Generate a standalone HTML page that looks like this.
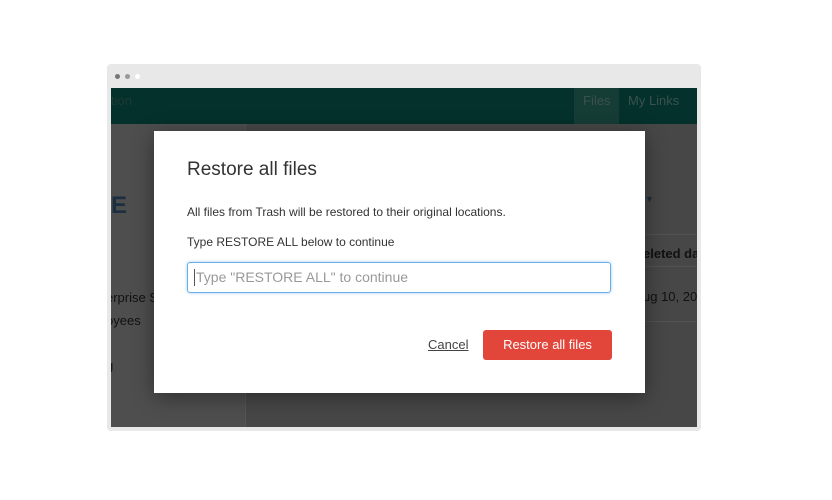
<!DOCTYPE html>
<html><head><style>
*{margin:0;padding:0;box-sizing:border-box}
body{width:832px;height:500px;background:#fff;position:relative;font-family:"Liberation Sans",sans-serif;overflow:hidden}
.frame{position:absolute;left:107px;top:64px;width:594px;height:367px;background:#e8e8e8;border-radius:4px}
.dot{position:absolute;top:74px;width:5px;height:5px;border-radius:50%}
.content{position:absolute;left:111px;top:88px;width:586px;height:339px;background:#474747;overflow:hidden}
.hdr{position:absolute;left:0;top:0;width:586px;height:36px;background:#04312b}
.side{position:absolute;left:0;top:36px;width:135px;height:303px;background:#4e4e4e;border-right:1px solid #555}
.t{position:absolute;color:#111;font-size:13px;white-space:nowrap}
.modal{position:absolute;left:154px;top:131px;width:491px;height:262px;background:#fff;box-shadow:0 4px 20px rgba(0,0,0,.4)}
</style></head><body>
<div class="frame"></div>
<div class="dot" style="left:115px;background:#777"></div>
<div class="dot" style="left:125px;background:#999"></div>
<div class="dot" style="left:135px;background:#fff"></div>
<div class="content">
 <div class="hdr">
  <div style="position:absolute;left:0;top:5px;font-size:13px;color:#1d3a35">tion</div>
  <div style="position:absolute;left:463px;top:0;width:45px;height:36px;background:#163c36"></div>
  <div style="position:absolute;left:472px;top:5px;font-size:13px;color:#3a524e">Files</div>
  <div style="position:absolute;left:517px;top:5px;font-size:13px;color:#3a524e">My Links</div>
 </div>
 <div class="side"></div>
 <div style="position:absolute;left:0;top:104px;font-size:24px;font-weight:bold;color:#1c2e40">E</div>
 <div class="t" style="left:-5px;top:202px">erprise S</div>
 <div class="t" style="left:-5px;top:225px">oyees</div>
 <div class="t" style="left:-5px;top:270px">g</div>
 <div style="position:absolute;left:534px;top:106px;color:#1c2e40;font-size:9px">▼</div>
 <div style="position:absolute;left:533px;top:146px;width:60px;height:1px;background:#525252"></div>
 <div class="t" style="left:532px;top:158px;font-weight:bold">eleted dat</div>
 <div style="position:absolute;left:533px;top:178px;width:60px;height:1px;background:#525252"></div>
 <div class="t" style="left:532px;top:201px">ug 10, 201</div>
 <div style="position:absolute;left:533px;top:233px;width:60px;height:1px;background:#525252"></div>
</div>
<div class="modal">
 <div class="t" style="left:33px;top:28px;font-size:19px;color:#333">Restore all files</div>
 <div class="t" style="left:33px;top:74px;font-size:12px;color:#333">All files from Trash will be restored to their original locations.</div>
 <div class="t" style="left:33px;top:104px;font-size:12px;color:#333">Type RESTORE ALL below to continue</div>
 <div style="position:absolute;left:33px;top:131px;width:424px;height:31px;border:1px solid #6aaee8;border-radius:3px;box-shadow:0 0 3px rgba(80,160,230,.5)">
  <div style="position:absolute;left:6px;top:6px;width:1px;height:17px;background:#555"></div>
  <div class="t" style="left:8px;top:6px;font-size:14px;color:#999">Type "RESTORE ALL" to continue</div>
 </div>
 <div class="t" style="left:274px;top:206px;font-size:13px;color:#444;text-decoration:underline">Cancel</div>
 <div style="position:absolute;left:329px;top:199px;width:129px;height:30px;background:#e2463b;border-radius:3px;color:#fff;font-size:13px;text-align:center;line-height:30px">Restore all files</div>
</div>
</body></html>
